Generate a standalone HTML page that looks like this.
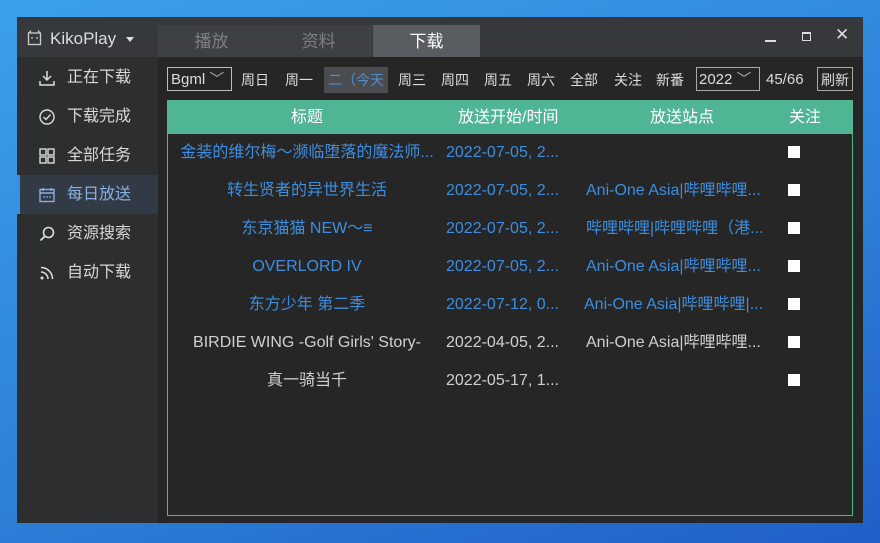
<!DOCTYPE html><html><head><meta charset="utf-8"><style>
body{margin:0;width:880px;height:543px;overflow:hidden;background:linear-gradient(160deg,#3aa0ec 0%,#2e7fd8 60%,#1f5fc8 100%);font-family:"Liberation Sans","Noto Sans CJK SC",sans-serif;position:relative}
.win{position:absolute;left:17px;top:17px;width:846px;height:506px;background:#262626}
.title{position:absolute;left:0;top:0;width:846px;height:40px;background:#36383b}
.side{position:absolute;left:0;top:40px;width:141px;height:466px;background:#2d2e30}
.tab{position:absolute;top:8px;height:32px;width:107px;text-align:center;line-height:34px;font-size:17px;color:#7d7f82;background:#3e4043}
.si{position:absolute;left:0;width:141px;height:39px;line-height:39px;color:#d8d8d8;font-size:16px}
.si span.t{position:absolute;left:50px}
.si svg{position:absolute;left:22px;top:12px}
.tb{position:absolute;top:53px;font-size:14px;color:#dcdcdc;line-height:20px}
.box{position:absolute;border:1px solid #aaa;height:24px;line-height:24px;font-size:15px;color:#ddd;top:50px;box-sizing:border-box}
.tbl{position:absolute;left:150px;top:83px;width:686px;height:416px;border:1px solid #4fb594;box-sizing:border-box}
.hd{position:absolute;left:0;top:0;width:684px;height:33px;background:#4fb594;color:#fff;font-size:16px;line-height:33px}
.row{position:absolute;left:0;width:684px;height:38px;line-height:38px;font-size:16px;white-space:nowrap}
.row div{position:absolute;top:0;overflow:hidden}
.c1{left:0;width:278px;text-align:center}.c2{left:278px;width:134px}.c3{left:418px;width:192px}
.cb{left:620px!important;top:12px!important;width:12px;height:12px;background:#fff}
.b{color:#3d8ee0}.w{color:#d0d0d0}
</style></head><body>
<div class="win">
<div class="title">
<svg style="position:absolute;left:10px;top:13px" width="15" height="16" viewBox="0 0 15 16"><rect x="1.5" y="3" width="12" height="11.5" fill="none" stroke="#ccc" stroke-width="1.3"/><path d="M2 3L4 0.5M13 3L11 0.5" stroke="#ccc" stroke-width="1.2"/><circle cx="5" cy="8" r="0.9" fill="#ccc"/><circle cx="10" cy="8" r="0.9" fill="#ccc"/></svg>
<div style="position:absolute;left:33px;top:12px;font-size:17px;color:#ddd">KikoPlay</div>
<div style="position:absolute;left:109px;top:20px;border:4px solid transparent;border-top:5px solid #ddd;width:0;height:0"></div>
<div class="tab" style="left:141px">播放</div><div class="tab" style="left:248px">资料</div><div class="tab" style="left:356px;background:#595c60;color:#fff">下载</div>
<div style="position:absolute;left:748px;top:23px;width:11px;height:2px;background:#ddd"></div>
<div style="position:absolute;left:785px;top:15px;width:7px;height:6px;border:1.5px solid #ddd;border-top-width:2.5px"></div>
<div style="position:absolute;left:818px;top:8px;font-size:17px;color:#ddd">✕</div>
</div>
<div class="side">
<div class="si" style="top:1px"><svg width="16" height="16"><path d="M8 1v9M4 6l4 4 4-4M1 11v4h14v-4" fill="none" stroke="#ddd" stroke-width="1.5"/></svg><span class="t">正在下载</span></div>
<div class="si" style="top:40px"><svg width="16" height="16"><circle cx="8" cy="8" r="7" fill="none" stroke="#ddd" stroke-width="1.4"/><path d="M4.5 8l2.5 2.5 4.5-5" fill="none" stroke="#ddd" stroke-width="1.4"/></svg><span class="t">下载完成</span></div>
<div class="si" style="top:79px"><svg width="16" height="16"><g fill="none" stroke="#ddd" stroke-width="1.4"><rect x="1" y="1" width="6" height="6"/><rect x="9" y="1" width="6" height="6"/><rect x="1" y="9" width="6" height="6"/><rect x="9" y="9" width="6" height="6"/></g></svg><span class="t">全部任务</span></div>
<div class="si" style="top:118px;background:#323a46;color:#8ab0e0"><div style="position:absolute;left:0;top:0;width:3px;height:39px;background:#3a8ee8"></div><svg width="16" height="16"><rect x="1" y="2.5" width="14" height="12" fill="none" stroke="#8ab0e0" stroke-width="1.4"/><path d="M4 1v3M12 1v3M1 6h14" stroke="#8ab0e0" stroke-width="1.4"/><circle cx="5" cy="10" r="0.9" fill="#8ab0e0"/><circle cx="8" cy="10" r="0.9" fill="#8ab0e0"/><circle cx="11" cy="10" r="0.9" fill="#8ab0e0"/></svg><span class="t">每日放送</span></div>
<div class="si" style="top:157px"><svg width="16" height="16"><circle cx="9.5" cy="6.5" r="5" fill="none" stroke="#ddd" stroke-width="1.6"/><path d="M6 10l-4.5 4.5" stroke="#ddd" stroke-width="1.8"/></svg><span class="t">资源搜索</span></div>
<div class="si" style="top:196px"><svg width="16" height="16"><circle cx="3" cy="13" r="1.5" fill="#ddd"/><path d="M2 7a7 7 0 0 1 7 7M2 2.5a11.5 11.5 0 0 1 11.5 11.5" fill="none" stroke="#ddd" stroke-width="1.5"/></svg><span class="t">自动下载</span></div>
</div>
<div class="box" style="left:150px;width:65px;padding-left:3px;border-color:#bbb">Bgml <span style="color:#aaa">﹀</span></div>
<div class="tb" style="left:224px">周日</div><div class="tb" style="left:268px">周一</div>
<div style="position:absolute;left:307px;top:50px;width:64px;height:26px;background:#4a4c50;color:#4f8fd0;font-size:14px;line-height:26px;text-align:center">二（今天</div>
<div class="tb" style="left:381px">周三</div><div class="tb" style="left:424px">周四</div><div class="tb" style="left:467px">周五</div><div class="tb" style="left:510px">周六</div><div class="tb" style="left:553px">全部</div><div class="tb" style="left:597px">关注</div><div class="tb" style="left:639px">新番</div>
<div class="box" style="left:679px;width:64px;padding-left:2px">2022 <span style="color:#aaa">﹀</span></div>
<div class="tb" style="left:749px;font-size:15px">45/66</div>
<div class="box" style="left:800px;width:36px;font-size:14px;text-align:center">刷新</div>
<div class="tbl">
<div class="hd"><span style="position:absolute;left:123px">标题</span><span style="position:absolute;left:290px">放送开始/时间</span><span style="position:absolute;left:482px">放送站点</span><span style="position:absolute;left:621px">关注</span></div>
<div class="row b" style="top:33px"><div class="c1">金装的维尔梅～濒临堕落的魔法师...</div><div class="c2">2022-07-05, 2...</div><div class="c3"></div><div class="cb"></div></div>
<div class="row b" style="top:71px"><div class="c1">转生贤者的异世界生活</div><div class="c2">2022-07-05, 2...</div><div class="c3">Ani-One Asia|哔哩哔哩...</div><div class="cb"></div></div>
<div class="row b" style="top:109px"><div class="c1">东京猫猫 NEW～≡</div><div class="c2">2022-07-05, 2...</div><div class="c3">哔哩哔哩|哔哩哔哩（港...</div><div class="cb"></div></div>
<div class="row b" style="top:147px"><div class="c1">OVERLORD IV</div><div class="c2">2022-07-05, 2...</div><div class="c3">Ani-One Asia|哔哩哔哩...</div><div class="cb"></div></div>
<div class="row b" style="top:185px"><div class="c1">东方少年 第二季</div><div class="c2">2022-07-12, 0...</div><div class="c3" style="left:416px">Ani-One Asia|哔哩哔哩|...</div><div class="cb"></div></div>
<div class="row w" style="top:223px"><div class="c1">BIRDIE WING -Golf Girls' Story-</div><div class="c2">2022-04-05, 2...</div><div class="c3">Ani-One Asia|哔哩哔哩...</div><div class="cb"></div></div>
<div class="row w" style="top:261px"><div class="c1">真一骑当千</div><div class="c2">2022-05-17, 1...</div><div class="c3"></div><div class="cb"></div></div>
</div>
</div>
</body></html>
